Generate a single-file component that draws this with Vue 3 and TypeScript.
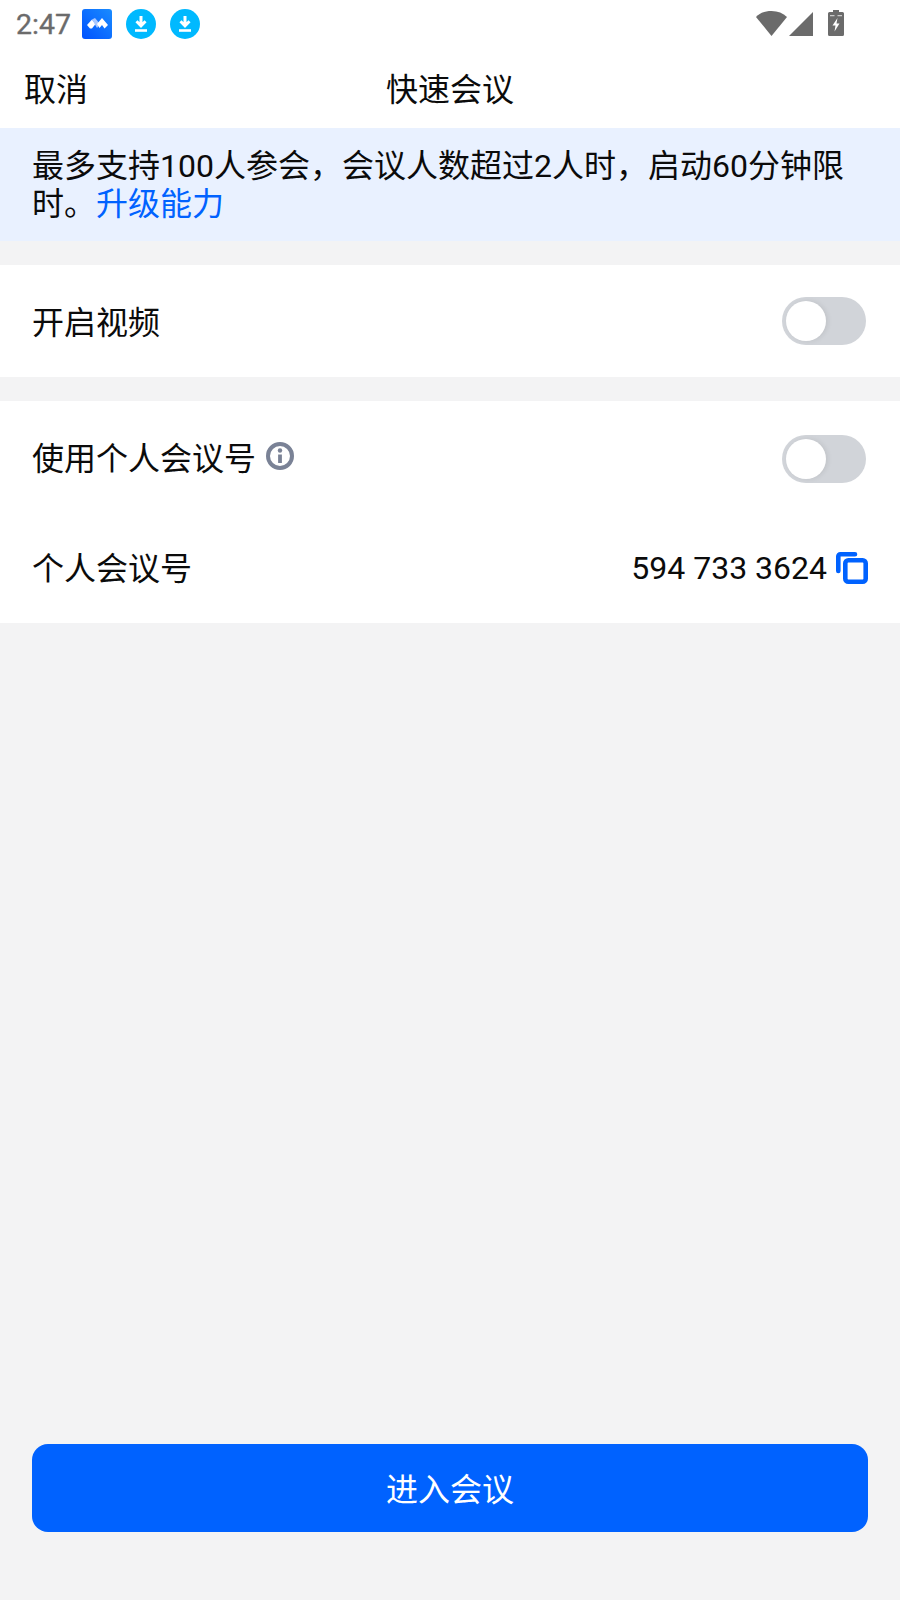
<script setup lang="ts">
const comma = '\uFF0C'
const bannerLead = `最多支持100人参会${comma}会议人数超过2人时${comma}启动60分钟限时。`
</script>

<template>
  <div class="page">
    <div class="status">
      <span class="time">2:47</span>
      <svg class="app" width="30" height="30" viewBox="0 0 30 30">
        <defs>
          <linearGradient id="lg" x1="0" y1="1" x2="1" y2="0">
            <stop offset="0" stop-color="#0052ff" />
            <stop offset="1" stop-color="#1a8cff" />
          </linearGradient>
        </defs>
        <rect width="30" height="30" rx="3" fill="url(#lg)" />
        <path d="M5 16 10 10.500l3.500 4.500-3.500 4.500H8z" fill="#fff" />
        <path d="M10 10.500l3-1.500 5 6-3 4z" fill="#a9c8ff" />
        <path d="M15 15 20 9l6 7-3.500 3.500-2.500-3.500-2.500 3z" fill="#fff" />
      </svg>
      <svg v-for="n in 2" :key="n" class="dl" width="30" height="30" viewBox="0 0 30 30">
        <circle cx="15" cy="15" r="15" fill="#00b9ff" />
        <path d="M15 7v9.500M10.500 12.300 15 16.800l4.500-4.500" fill="none" stroke="#fff" stroke-width="3" />
        <path d="M9 21.500h12" stroke="#fff" stroke-width="2.600" />
      </svg>
      <span class="spacer"></span>
      <svg class="wifi" width="31" height="25" viewBox="0 0 31 25">
        <path d="M0 6C4 2 9 0 15.500 0S27 2 31 6L15.500 25z" fill="#6b6b6b" />
      </svg>
      <svg class="signal" width="24" height="24" viewBox="0 0 24 24">
        <path d="M0 24 24 0v24z" fill="#6b6b6b" />
      </svg>
      <svg class="battery" width="16" height="26" viewBox="0 0 16 26">
        <path d="M5 0h6v2h3.500A1.500 1.500 0 0 1 16 3.500v21a1.500 1.500 0 0 1-1.500 1.500h-13A1.500 1.500 0 0 1 0 24.500v-21A1.500 1.500 0 0 1 1.500 2H5z" fill="#6b6b6b" />
        <path d="M2 5h4.500v1.300H2zM9.500 5H14v1.300H9.500z" fill="#c9c9c9" />
        <path d="M9.500 8 4.500 15.500h3l-1 6 5-8h-3z" fill="#fff" />
      </svg>
    </div>

    <header class="nav">
      <span class="cancel">取消</span>
      <span class="title">快速会议</span>
    </header>

    <div class="banner">{{ bannerLead }}<span class="link">升级能力</span></div>

    <section class="card">
      <div class="row video">
        <span class="label">开启视频</span>
        <span class="switch"><span class="knob"></span></span>
      </div>
    </section>

    <section class="card">
      <div class="row personal">
        <span class="label with-icon">
          使用个人会议号
          <svg width="28" height="28" viewBox="0 0 28 28">
            <circle cx="14" cy="14" r="12" fill="none" stroke="#7a8296" stroke-width="4" />
            <circle cx="14" cy="8.500" r="2.200" fill="#7a8296" />
            <path d="M14 12.500v8.500" stroke="#7a8296" stroke-width="3.800" />
          </svg>
        </span>
        <span class="switch"><span class="knob"></span></span>
      </div>
      <div class="row number">
        <span class="label">个人会议号</span>
        <span class="value">
          <span class="digits">594 733 3624</span>
          <svg width="32" height="32" viewBox="0 0 32 32">
            <rect x="9.300" y="8.300" width="20.400" height="21.400" rx="3" fill="none" stroke="#0062ff" stroke-width="4.600" />
            <path d="M2.300 19V4.300a2 2 0 0 1 2-2H19" fill="none" stroke="#0062ff" stroke-width="4.600" stroke-linecap="round" />
          </svg>
        </span>
      </div>
    </section>

    <div class="fill"></div>

    <div class="footer">
      <button class="enter">进入会议</button>
    </div>
  </div>
</template>

<style>
html, body { margin: 0; padding: 0; }
</style>

<style scoped>
.page {
  width: 900px;
  height: 1600px;
  display: flex;
  flex-direction: column;
  background: #f3f3f4;
  font-family: Roboto, "Noto Sans CJK SC", sans-serif;
  color: #0b0b0b;
  overflow: hidden;
}
.status {
  height: 50px;
  background: #fff;
  display: flex;
  align-items: center;
  padding: 0 56px 0 16px;
  box-sizing: border-box;
}
.time { font-size: 28.500px; font-weight: 400; -webkit-text-stroke: 0.35px #6b6b6b; color: #6b6b6b; width: 66px; padding-bottom: 2px; }
.app { margin-right: 14px; margin-bottom: 2px; }
.dl { margin-right: 14px; margin-bottom: 2px; }
.spacer { flex: 1; }
.wifi { margin-right: 2px; margin-bottom: 3px; }
.signal { margin-right: 15px; margin-bottom: 2px; }
.battery { margin-bottom: 4px; }
.nav {
  height: 78px;
  background: #fff;
  display: flex;
  align-items: center;
  justify-content: center;
  position: relative;
  font-size: 32px;
  padding-bottom: 4px;
  box-sizing: border-box;
}
.cancel { position: absolute; left: 24px; }
.banner {
  background: #e9f1ff;
  box-sizing: border-box;
  height: 113px;
  padding: 19px 32px 0;
  font-size: 32px;
  line-height: 38px;
  margin-bottom: 24px;
}
.link { color: #0062ff; }
.card { background: #fff; margin-bottom: 24px; }
.row {
  display: flex;
  align-items: center;
  justify-content: space-between;
  padding: 0 32px;
  font-size: 32px;
}
.video { height: 112px; padding-right: 34px; }
.video .label { padding-bottom: 2px; }
.personal { height: 116px; padding-right: 34px; }
.personal .label { padding-bottom: 6px; }
.number { height: 106px; }
.number .label { padding-bottom: 8px; }
.with-icon { display: flex; align-items: center; gap: 10px; }
.switch {
  width: 84px;
  height: 48px;
  border-radius: 24px;
  background: #d1d4d9;
  display: flex;
  align-items: center;
  padding-left: 4px;
  box-sizing: border-box;
}
.knob {
  width: 40px;
  height: 40px;
  border-radius: 50%;
  background: #fff;
  box-shadow: 2px 0 5px rgba(0, 0, 0, 0.08);
}
.value { display: flex; align-items: center; gap: 9px; padding-bottom: 4px; }
.digits { font-size: 32px; }
.fill { flex: 1; }
.footer { padding: 0 32px 68px; }
.enter {
  width: 100%;
  height: 88px;
  border: none;
  border-radius: 16px;
  background: #0062ff;
  color: #fff;
  font: inherit;
  font-size: 32px;
  padding-bottom: 3px;
}
</style>
